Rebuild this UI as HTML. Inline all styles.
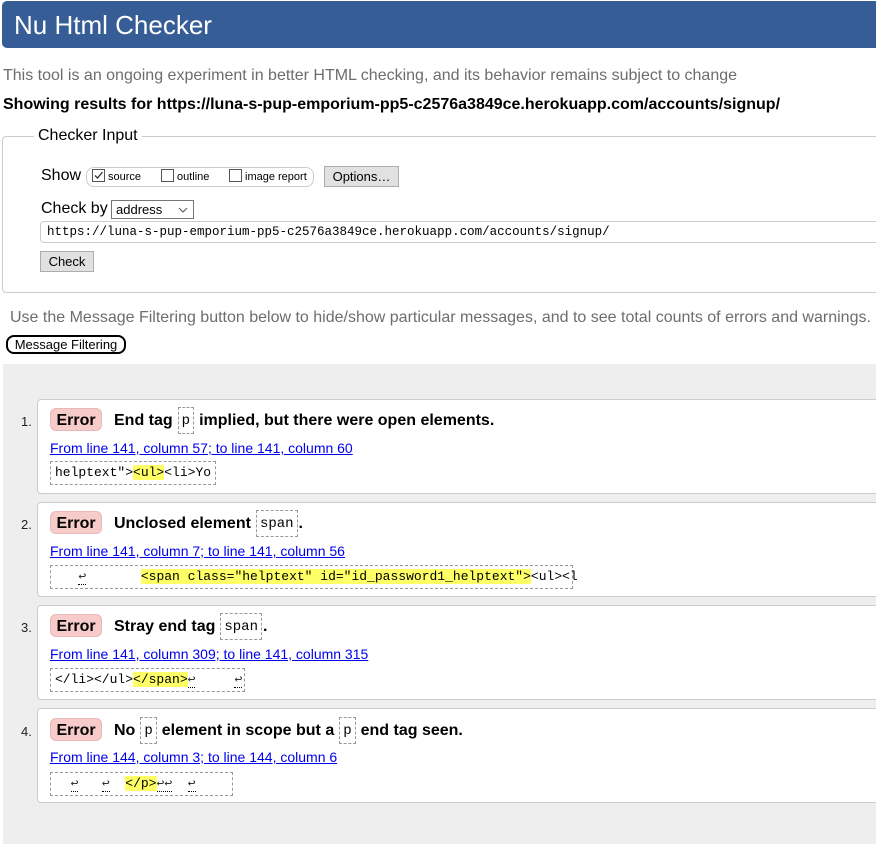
<!DOCTYPE html>
<html><head><meta charset="utf-8"><style>
*{box-sizing:border-box}
body{margin:0;width:876px;height:833px;background:#fff;font-family:"Liberation Sans",Arial,sans-serif;position:relative;overflow:hidden;color:#000}
.a{position:absolute;white-space:nowrap}
.mono{font-family:"Liberation Mono","DejaVu Sans Mono",monospace}
.hdr{left:2px;top:1px;width:880px;height:47px;background:#365d95;border-radius:5px;color:#fff;font-size:26px;padding:9px 0 0 12px}
.cb{display:inline-block;width:13px;height:13px;border:1px solid #555;background:#fff;vertical-align:-2px;margin-right:3px;position:relative}
.btn{background:#e1e1e1;border:1px solid #adadad;font-size:13px;text-align:center}
.gray{left:3px;top:364px;width:880px;height:480px;background:#eee}
.card{left:37px;width:850px;background:#fff;border:1px solid #ccc;border-radius:4px;height:95px}
.num{left:21px;font-size:13px;color:#222}
.err{left:50px;width:52px;height:23px;background:#f8cbcb;border:1px solid #e8b8b8;border-radius:6px;font-weight:bold;font-size:16px;text-align:center;line-height:23px}
.ttl{left:114px;font-weight:bold;font-size:16px;height:27px;display:flex;align-items:center;white-space:pre}
.ttl code{display:inline-block;font-family:"Liberation Mono","DejaVu Sans Mono",monospace;font-weight:normal;font-size:14px;border:1px dashed #999;padding:0 3px;height:27px;line-height:27px;margin:0 5px}
.ttl code.e{margin-right:1px}
.lnk{left:50px;font-size:14px;text-decoration:underline;color:#00e}
.code{left:50px;height:24px;border:1px dashed #999;font-family:"Liberation Mono","DejaVu Sans Mono",monospace;font-size:13px;line-height:22px;padding:0 4px}
.hl{background:#ff6}
.r{border-bottom:1px dotted #000;color:#333}
</style></head><body>
<div class="a hdr">Nu Html Checker</div>
<div class="a" style="left:3px;top:67px;font-size:16px;color:#6d6d6d">This tool is an ongoing experiment in better HTML checking, and its behavior remains subject to change</div>
<div class="a" style="left:3px;top:96px;font-size:16px;font-weight:bold">Showing results for https://luna-s-pup-emporium-pp5-c2576a3849ce.herokuapp.com/accounts/signup/</div>

<div class="a" style="left:2px;top:136px;width:885px;height:157px;border:1px solid #ccc;border-radius:4px"></div>
<div class="a" style="left:34px;top:127px;background:#fff;padding:0 4px;font-size:16px">Checker Input</div>

<div class="a" style="left:41px;top:167px;font-size:16px">Show</div>
<div class="a" style="left:86px;top:167px;width:228px;height:20px;border:1px solid #ccc;border-radius:8px"></div>
<div class="a" style="left:92px;top:169px;font-size:11px"><span class="cb"><svg width="11" height="11" style="position:absolute;left:0;top:0"><path d="M2 5.5L4.5 8L9.5 2" stroke="#333" stroke-width="1.3" fill="none"/></svg></span>source</div>
<div class="a" style="left:161px;top:169px;font-size:11px"><span class="cb"></span>outline</div>
<div class="a" style="left:229px;top:169px;font-size:11px"><span class="cb"></span>image report</div>
<div class="a btn" style="left:324px;top:166px;width:75px;height:21px;line-height:19px">Options…</div>

<div class="a" style="left:41px;top:200px;font-size:16px">Check by</div>
<div class="a" style="left:111px;top:200px;width:83px;height:19px;border:1px solid #767676;font-size:13px;line-height:17px;padding-left:4px">address<svg width="10" height="6" style="position:absolute;right:5px;top:6px"><path d="M1 1L5 5L9 1" stroke="#555" fill="none"/></svg></div>
<div class="a mono" style="left:40px;top:221px;width:850px;height:22px;border:1px solid #ccc;border-radius:4px;font-size:12.5px;line-height:20px;padding-left:6px">https://luna-s-pup-emporium-pp5-c2576a3849ce.herokuapp.com/accounts/signup/</div>
<div class="a btn" style="left:40px;top:251px;width:54px;height:21px;line-height:19px">Check</div>

<div class="a" style="left:10px;top:309px;font-size:16px;color:#6d6d6d">Use the Message Filtering button below to hide/show particular messages, and to see total counts of errors and warnings.</div>
<div class="a" style="left:6px;top:335px;width:120px;height:19px;border:2px solid #000;border-radius:8px;font-size:13px;line-height:15px;text-align:center">Message Filtering</div>

<div class="a gray"></div>

<div class="a card" style="top:399px"></div>
<div class="a num" style="top:414px">1.</div>
<div class="a err" style="top:408px">Error</div>
<div class="a ttl" style="top:407px">End tag<code>p</code>implied, but there were open elements.</div>
<div class="a lnk" style="top:440px">From line 141, column 57; to line 141, column 60</div>
<div class="a code" style="top:461px">helptext"&gt;<span class="hl">&lt;ul&gt;</span>&lt;li&gt;Yo</div>

<div class="a card" style="top:502px"></div>
<div class="a num" style="top:517px">2.</div>
<div class="a err" style="top:511px">Error</div>
<div class="a ttl" style="top:510px">Unclosed element<code class="e">span</code>.</div>
<div class="a lnk" style="top:543px">From line 141, column 7; to line 141, column 56</div>
<div class="a code" style="top:565px;width:523px">&nbsp;&nbsp;&nbsp;<span class="r">↩</span>&nbsp;&nbsp;&nbsp;&nbsp;&nbsp;&nbsp;&nbsp;<span class="hl">&lt;span class="helptext" id="id_password1_helptext"&gt;</span>&lt;ul&gt;&lt;l</div>

<div class="a card" style="top:605px"></div>
<div class="a num" style="top:620px">3.</div>
<div class="a err" style="top:614px">Error</div>
<div class="a ttl" style="top:613px">Stray end tag<code class="e">span</code>.</div>
<div class="a lnk" style="top:646px">From line 141, column 309; to line 141, column 315</div>
<div class="a code" style="top:668px;width:195px">&lt;/li&gt;&lt;/ul&gt;<span class="hl">&lt;/span&gt;</span><span class="r">↩</span>&nbsp;&nbsp;&nbsp;&nbsp;&nbsp;<span class="r">↩</span></div>

<div class="a card" style="top:708px"></div>
<div class="a num" style="top:724px">4.</div>
<div class="a err" style="top:718px">Error</div>
<div class="a ttl" style="top:717px">No<code>p</code>element in scope but a<code>p</code>end tag seen.</div>
<div class="a lnk" style="top:749px">From line 144, column 3; to line 144, column 6</div>
<div class="a code" style="top:772px;width:183px">&nbsp;&nbsp;<span class="r">↩</span>&nbsp;&nbsp;&nbsp;<span class="r">↩</span>&nbsp;&nbsp;<span class="hl">&lt;/p&gt;</span><span class="r">↩↩</span>&nbsp;&nbsp;<span class="r">↩</span></div>
</body></html>
